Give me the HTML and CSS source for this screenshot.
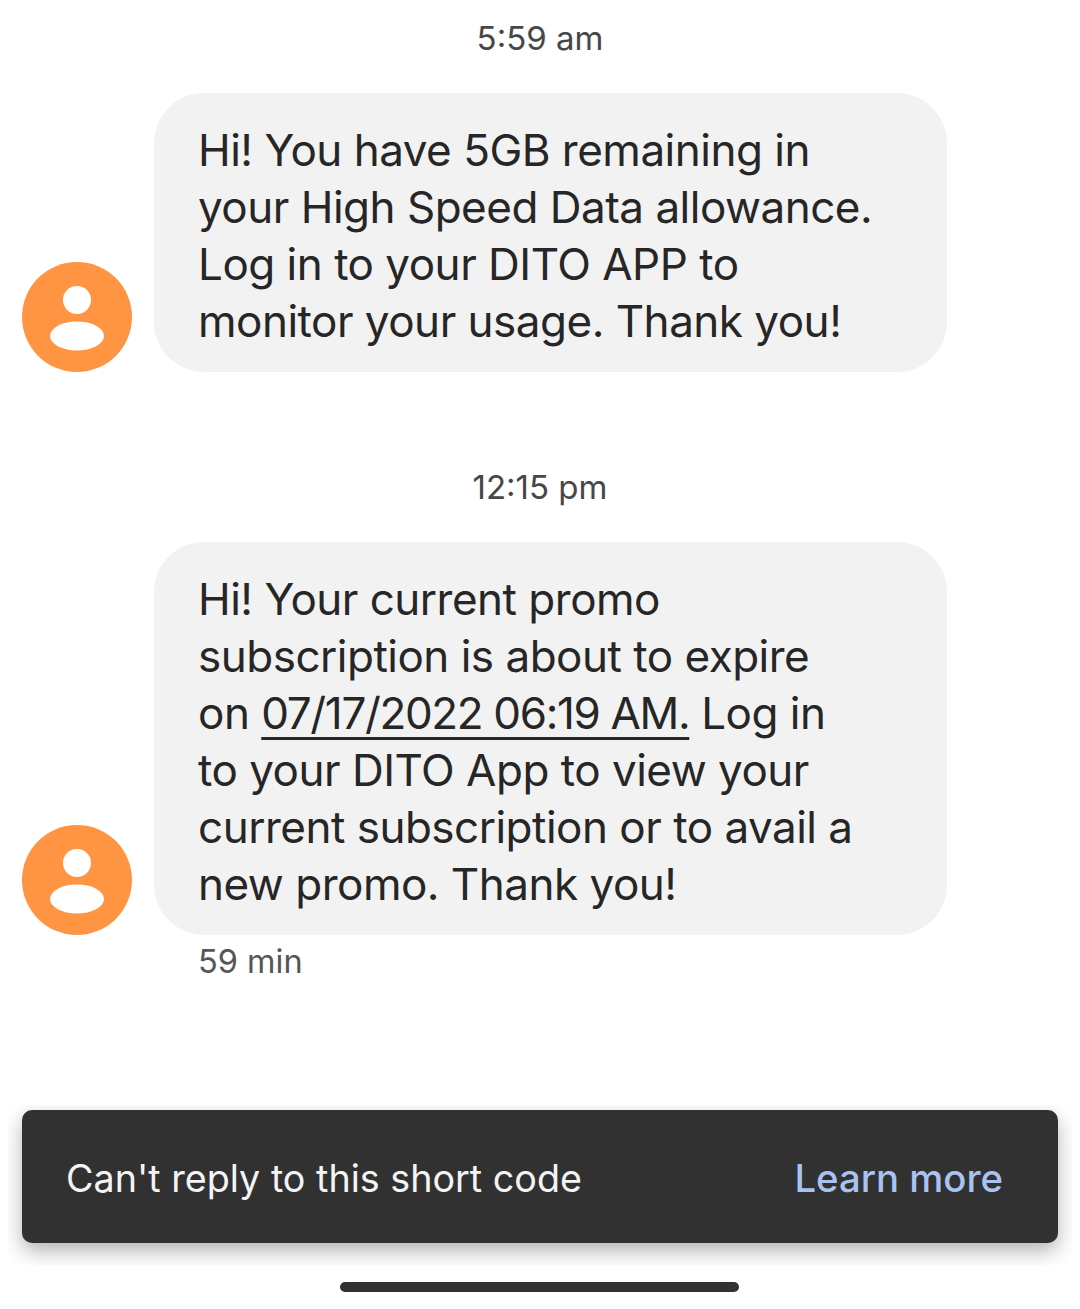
FILE: index.html
```html
<!DOCTYPE html>
<html lang="en">
<head>
    <meta charset="UTF-8">
    <meta name="viewport" content="width=device-width, initial-scale=1.0">
    <title>Messages</title>
    <link rel="stylesheet" href="styles.css">
</head>
<body>

    <!-- Conversation -->
    <div class="thread">
        <div class="time time-first">5:59 am</div>
        <div class="message">
            <svg class="avatar" viewBox="0 0 110 110" aria-hidden="true">
                <circle cx="55" cy="55" r="55" fill="#ff9543"/>
                <circle cx="55" cy="38" r="14" fill="#fff"/>
                <ellipse cx="55" cy="74" rx="27" ry="14.5" fill="#fff"/>
            </svg>
            <div class="bubble">Hi! You have 5GB remaining in your High Speed Data allowance. Log in to your DITO APP to monitor your usage. Thank you!</div>
        </div>

        <div class="time time-next">12:15 pm</div>
        <div class="message">
            <svg class="avatar" viewBox="0 0 110 110" aria-hidden="true">
                <circle cx="55" cy="55" r="55" fill="#ff9543"/>
                <circle cx="55" cy="38" r="14" fill="#fff"/>
                <ellipse cx="55" cy="74" rx="27" ry="14.5" fill="#fff"/>
            </svg>
            <div class="bubble">Hi! Your current promo subscription is about to expire<br>on <a class="date-link" href="#">07/17/2022 06:19 AM.</a> Log in<br>to your DITO App to view your current subscription or to avail a new promo. Thank you!</div>
        </div>
        <div class="age">59 min</div>
    </div>

    <!-- Snackbar -->
    <div class="snack-clip">
        <div class="snackbar">
            <span class="snack-text">Can't reply to this short code</span>
            <a class="snack-action" href="#">Learn more</a>
        </div>
    </div>

    <!-- Gesture bar -->
    <div class="nav-area">
        <div class="nav-pill"></div>
    </div>

</body>
</html>
```

FILE: styles.css
```css
/* General Styles */
* {
    margin: 0;
    padding: 0;
    box-sizing: border-box;
    font-family: Inter, Roboto, sans-serif;
}
body {
    background: #ffffff;
    color: #262626;
    width: 1080px;
    height: 1309px;
    overflow: hidden;
}

/* Conversation */
.thread {
    height: 1105px;
}
.time {
    text-align: center;
    font-size: 33px;
    line-height: 40px;
    color: #474747;
}
.time-first {
    padding-top: 18px;
    margin-bottom: 35px;
}
.time-next {
    margin-top: 95px;
    margin-bottom: 35px;
}
.message {
    display: flex;
    align-items: flex-end;
    gap: 22px;
    padding-left: 22px;
}
.avatar {
    width: 110px;
    height: 110px;
    flex-shrink: 0;
}
.bubble {
    width: 793px;
    padding: 29px 65px 22px 44px;
    background: #f2f2f2;
    border-radius: 50px;
    font-size: 44px;
    line-height: 57px;
    letter-spacing: -0.5px;
    color: #262626;
}
.date-link {
    color: inherit;
    letter-spacing: -1.35px;
    text-decoration: underline;
    text-decoration-thickness: 3px;
    text-underline-offset: 8px;
}
.age {
    padding: 7px 0 0 198px;
    font-size: 32.5px;
    line-height: 40px;
    color: #565656;
}

/* Snackbar */
.snack-clip {
    margin: 0 8px;
    padding: 5px 14px 22px;
    overflow: hidden;
}
.snackbar {
    height: 133px;
    display: flex;
    align-items: center;
    justify-content: space-between;
    padding: 3px 55px 0 44px;
    background: #313131;
    border-radius: 10px;
    box-shadow: 0 8px 20px rgba(0, 0, 0, 0.3);
}
.snack-text {
    font-size: 37.7px;
    color: #f4f4f4;
}
.snack-action {
    font-size: 38.3px;
    font-weight: 500;
    color: #a8c3f0;
    text-decoration: none;
}

/* Gesture bar */
.nav-area {
    padding: 17px 0 0 340px;
}
.nav-pill {
    width: 399px;
    height: 10px;
    background: #313131;
    border-radius: 5px;
}
```
